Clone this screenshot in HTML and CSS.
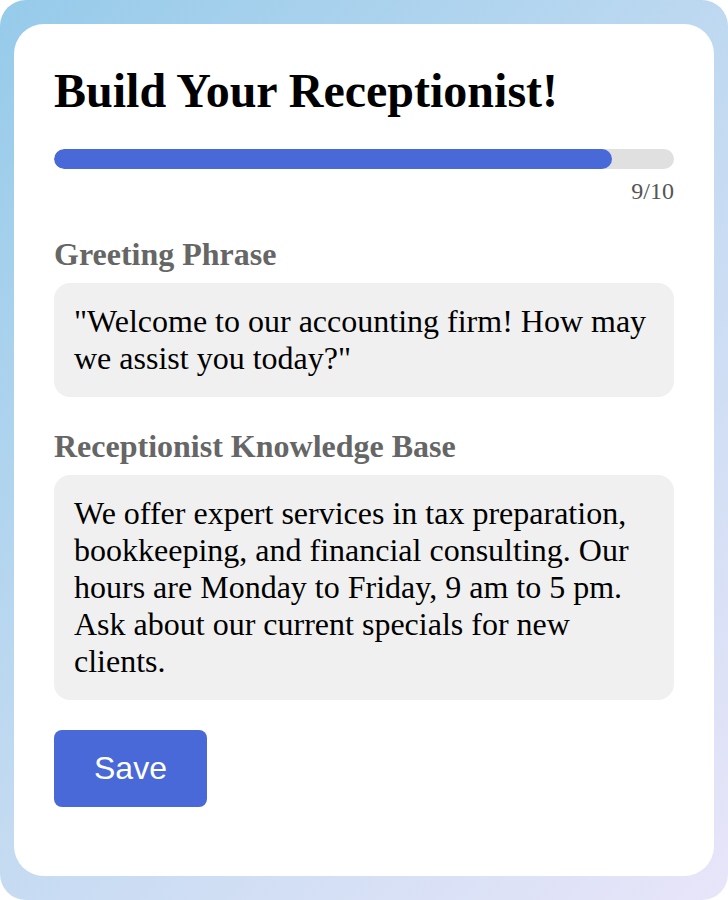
FILE: index.html
```html
<!DOCTYPE html>
<html lang="en">
<head>
    <meta charset="UTF-8">
    <title>Build Your Receptionist</title>
    <link rel="stylesheet" href="styles.css">
</head>
<body>
    <div class="fondo">
        <div class="tarjeta">
            <h1>Build Your Receptionist!</h1>

            <div class="progreso">
                <div class="progreso-relleno" style="width: 90%"></div>
            </div>
            <div class="paso">9/10</div>

            <div class="campo">
                <h2>Greeting Phrase</h2>
                <div class="caja">"Welcome to our accounting firm! How may we assist you today?"</div>
            </div>

            <div class="campo">
                <h2>Receptionist Knowledge Base</h2>
                <div class="caja">We offer expert services in tax preparation, bookkeeping, and financial consulting. Our hours are Monday to Friday, 9 am to 5 pm. Ask about our current specials for new clients.</div>
            </div>

            <button class="boton-guardar">Save</button>
        </div>
    </div>
</body>
</html>
```

FILE: styles.css
```css
body {
    margin: 0;
    font-family: 'Liberation Serif', 'Times New Roman', serif;
    background: #fff;
}

.fondo {
    min-height: 900px;
    box-sizing: border-box;
    padding: 24px 14px;
    border-radius: 26px;
    background: linear-gradient(135deg, #96cbea 0%, #c2daf1 50%, #e8e5f9 100%);
}

.tarjeta {
    background: #fff;
    border-radius: 30px;
    padding: 39px 40px 40px;
    min-height: 852px;
    box-sizing: border-box;
}

h1 {
    margin: 0 0 31px;
    font-size: 48px;
    font-weight: bold;
    color: #000;
}

.progreso {
    height: 20px;
    background: #e0e0e0;
    border-radius: 10px;
    overflow: hidden;
}

.progreso-relleno {
    height: 100%;
    background: #4a69d9;
    border-radius: 10px;
}

.paso {
    margin-top: 9px;
    text-align: right;
    font-size: 24px;
    color: #555;
}

.campo h2 {
    margin: 31px 0 10px;
    font-size: 32px;
    font-weight: bold;
    color: #666;
}

.caja {
    background: #f0f0f0;
    border-radius: 16px;
    padding: 20px;
    font-size: 32px;
    color: #000;
}

.boton-guardar {
    margin-top: 30px;
    padding: 20px 40px;
    background: #4a69d9;
    color: #fff;
    border: none;
    border-radius: 8px;
    font-family: 'Liberation Sans', Arial, sans-serif;
    font-size: 32px;
    cursor: pointer;
}
```
